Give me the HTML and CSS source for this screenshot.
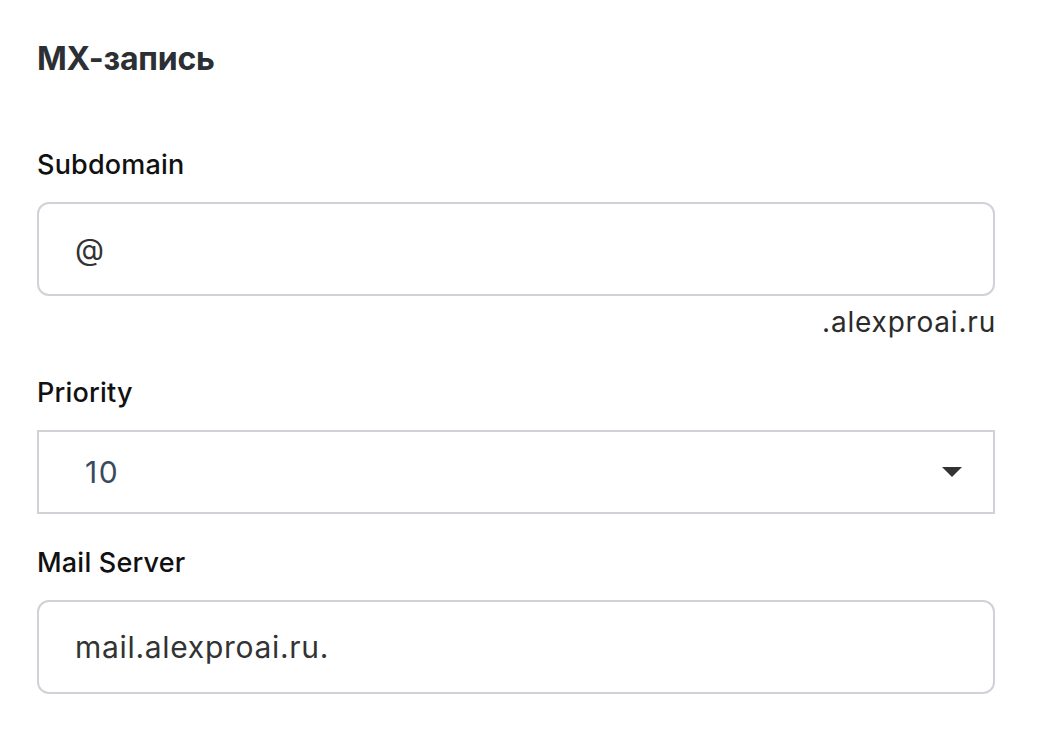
FILE: index.html
```html
<!DOCTYPE html>
<html lang="ru">
<head>
<meta charset="utf-8">
<title>MX-запись</title>
<link rel="stylesheet" href="styles.css">
</head>
<body>
<main class="page">
  <h2 class="title">MX-запись</h2>

  <section class="field field-sub">
    <label class="label">Subdomain</label>
    <div class="input">@</div>
    <div class="suffix">.alexproai.ru</div>
  </section>

  <section class="field">
    <label class="label">Priority</label>
    <div class="select">
      <span class="select-value">10</span>
      <svg class="caret" width="20" height="10" viewBox="0 0 20 10"><path d="M0 0H20L10 10Z" fill="#333"/></svg>
    </div>
  </section>

  <section class="field">
    <label class="label">Mail Server</label>
    <div class="input">mail.alexproai.ru.</div>
  </section>
</main>
</body>
</html>
```
FILE: styles.css
```css
html, body {
  margin: 0;
  background: #ffffff;
}
body {
  font-family: Inter, "Noto Sans", sans-serif;
}
.page {
  width: 958px;
  padding: 37px 0 0 37px;
  display: flex;
  flex-direction: column;
}
.title {
  margin: 0;
  font-size: 32px;
  line-height: 44px;
  font-weight: 700;
  letter-spacing: -0.2px;
  color: #2c2f33;
}
.field {
  display: flex;
  flex-direction: column;
}
.field-sub {
  margin-top: 68px;
}
.label {
  font-size: 27px;
  line-height: 32px;
  font-weight: 500;
  letter-spacing: 0.2px;
  color: #111111;
  margin-bottom: 21px;
}
.input {
  height: 94px;
  box-sizing: border-box;
  border: 2px solid #cfd2d7;
  border-radius: 12px;
  padding: 0 36px;
  display: flex;
  align-items: center;
  font-size: 30px;
  letter-spacing: 0.7px;
  color: #333333;
}
.suffix {
  text-align: right;
  font-size: 28px;
  line-height: 32px;
  letter-spacing: 0.8px;
  color: #2b2b2b;
  margin-top: 10px;
  margin-bottom: 39px;
  margin-right: -1px;
}
.select {
  height: 84px;
  box-sizing: border-box;
  border: 2px solid #cfd2d7;
  padding: 0 31px 0 46px;
  display: flex;
  align-items: center;
  justify-content: space-between;
  font-size: 30px;
  letter-spacing: 1.5px;
  color: #3b4a5e;
  margin-bottom: 33px;
}
```
